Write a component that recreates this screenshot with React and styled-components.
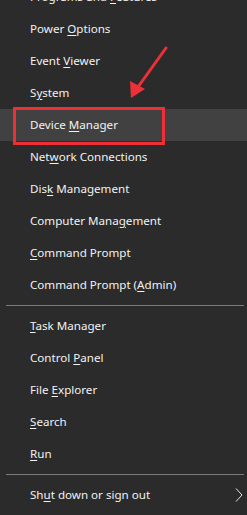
import React from 'react';
import styled, { createGlobalStyle } from 'styled-components';

const GlobalStyle = createGlobalStyle`
  html, body {
    margin: 0;
    padding: 0;
    background: #2b2b2b;
    overflow: hidden;
  }
  body {
    font-family: "Noto Sans", "Open Sans", sans-serif;
  }
`;

const Menu = styled.div`
  position: relative;
  width: 247px;
  height: 515px;
  background: #2b2b2b;
  overflow: hidden;
`;

const List = styled.ul`
  list-style: none;
  margin: -19px 0 0;
  padding: 0;
  display: flex;
  flex-direction: column;
`;

const Item = styled.li`
  position: relative;
  height: 32px;
  box-sizing: border-box;
  display: flex;
  align-items: center;
  padding: 0 0 2px 30px;
  font-size: 11.6px;
  color: #f2f2f2;
  background: ${(p) => (p.active ? '#414141' : 'transparent')};
`;

const Label = styled.span`
  white-space: pre;
`;

const Key = styled.span`
  text-decoration: underline;
  text-underline-offset: 2px;
`;

const Separator = styled.li`
  height: 1px;
  margin: 4px 3px 4px 6px;
  background: #7b7b7b;
`;

const Highlight = styled.div`
  position: absolute;
  left: 13px;
  top: -2px;
  width: 152px;
  height: 38px;
  box-sizing: border-box;
  border: 3px solid #ef2f37;
  pointer-events: none;
`;

const Chevron = styled.svg`
  position: absolute;
  right: 4px;
  top: 50%;
  transform: translateY(-50%);
`;

const Arrow = styled.svg`
  position: absolute;
  left: 120px;
  top: 40px;
`;

const items = [
  ['Programs and ', 'F', 'eatures'],
  ['Power ', 'O', 'ptions'],
  ['Event ', 'V', 'iewer'],
  ['S', 'y', 'stem'],
  ['Device ', 'M', 'anager', 'active'],
  ['Net', 'w', 'ork Connections'],
  ['Dis', 'k', ' Management'],
  ['Computer Mana', 'g', 'ement'],
  ['', 'C', 'ommand Prompt'],
  ['Command Prompt (', 'A', 'dmin)'],
  'sep',
  ['', 'T', 'ask Manager'],
  ['Control ', 'P', 'anel'],
  ['File ', 'E', 'xplorer'],
  ['', 'S', 'earch'],
  ['', 'R', 'un'],
  'sep',
  ['Sh', 'u', 't down or sign out', 'more'],
];

export default function App() {
  return (
    <Menu>
      <GlobalStyle />
      <List>
        {items.map((it, i) => {
          if (it === 'sep') return <Separator key={i} />;
          const [pre, key, post, flag] = it;
          return (
            <Item key={i} active={flag === 'active'}>
              <Label>
                {pre}
                <Key>{key}</Key>
                {post}
              </Label>
              {flag === 'active' && <Highlight />}
              {flag === 'more' && (
                <Chevron width="8" height="15" viewBox="0 0 8 15">
                  <path d="M1 1 L7 7.5 L1 14" fill="none" stroke="#e6e6e6" strokeWidth="1" />
                </Chevron>
              )}
            </Item>
          );
        })}
      </List>
      <Arrow width="50" height="62" viewBox="0 0 50 62">
        <path d="M46 8 L18 47" stroke="#ee3038" strokeWidth="3" strokeLinecap="round" fill="none" />
        <path d="M11 58 L10 41 L25 49 Z" fill="#ee3038" />
      </Arrow>
    </Menu>
  );
}
